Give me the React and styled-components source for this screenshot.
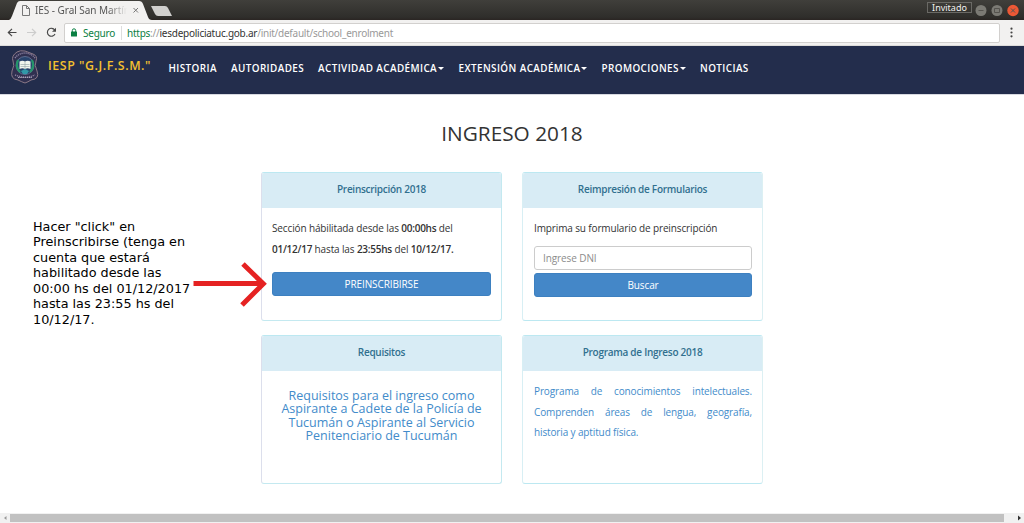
import React from "react";
import styled, { createGlobalStyle } from "styled-components";

const GlobalStyle = createGlobalStyle`
  *, *::before, *::after { box-sizing: border-box; }
  html, body { margin: 0; padding: 0; overflow: hidden; background: #fff; }
  h1, h2, p { margin: 0; font-weight: 400; }
  button, input { font: inherit; margin: 0; }
`;

const Window = styled.div`
  display: flex;
  flex-direction: column;
  width: 1024px;
  height: 523px;
  overflow: hidden;
  background: #fff;
  color: #333;
  font-family: "Open Sans", sans-serif;
`;

const TitleBar = styled.header`
  display: flex;
  justify-content: space-between;
  height: 20px;
  background: linear-gradient(#403f3b, #2f2e2b 85%, #2a2523);
`;

const TabStrip = styled.div`
  position: relative;
  width: 180px;
  height: 20px;
`;

const TabShapes = styled.svg`
  position: absolute;
  left: 0;
  top: 0;
`;

const TabLabel = styled.div`
  position: absolute;
  left: 35px;
  top: 3px;
  width: 93px;
  overflow: hidden;
  white-space: nowrap;
  font: 10px/15px "Noto Sans", sans-serif;
  letter-spacing: -0.05px;
  color: #555;
  mask-image: linear-gradient(90deg, #000 78%, transparent 99%);
`;

const WindowControls = styled.div`
  display: flex;
  align-items: flex-start;
  padding-right: 3px;
`;

const Guest = styled.div`
  width: 45px;
  height: 11px;
  margin: 2px 3px 0 0;
  border: 1px solid #6a6965;
  color: #f2f2f0;
  font: 9px/9.5px "Noto Sans", sans-serif;
  text-align: center;
`;

const Toolbar = styled.div`
  display: flex;
  align-items: center;
  height: 26px;
  background: #f2f1f0;
  border-bottom: 1px solid #dedcda;
`;

const AddressBar = styled.div`
  display: flex;
  align-items: center;
  width: 936px;
  height: 20px;
  padding-left: 6px;
  border: 1px solid #d2d0ce;
  border-radius: 2px;
  background: #fff;
  color: #999;
  font: 10px/18px "Noto Sans", sans-serif;
  letter-spacing: -0.25px;
  white-space: pre;
`;

const Secure = styled.span`
  width: 38px;
  margin-left: 6px;
  color: #0b8043;
`;

const Url = styled.span`
  margin-left: 5px;
`;

const Scheme = styled.span`
  color: #0b8043;
`;

const Host = styled.span`
  color: #333;
`;

const UrlDivider = styled.span`
  width: 1px;
  height: 14px;
  background: #ddd;
`;

const NavBar = styled.nav`
  display: flex;
  height: 49px;
  background: #232d4c;
  border-bottom: 1px solid #d7d9e0;
  color: #fff;
`;

const Brand = styled.span`
  width: 128.5px;
  padding-left: 8px;
  color: #f3c02f;
  font-size: 12.4px;
  font-weight: 600;
  line-height: 40px;
  letter-spacing: 0.55px;
  white-space: nowrap;
`;

const NavItem = styled.a`
  display: flex;
  align-items: center;
  width: ${(p) => p.$w}px;
  height: 44px;
  font-size: 9.9px;
  font-weight: 600;
  letter-spacing: 0.42px;
  white-space: nowrap;
`;

const Caret = styled.span`
  margin-left: 1px;
  margin-top: 1px;
  border: 3px solid transparent;
  border-top-color: #fff;
  border-bottom: 0;
`;

const Page = styled.main`
  position: relative;
  flex: 1;
`;

const PageTitle = styled.h1`
  padding-top: 24px;
  height: 77px;
  font-size: 20.8px;
  line-height: 28px;
  text-align: center;
`;

const Cards = styled.section`
  display: grid;
  grid-template-columns: 241px 241px;
  grid-template-rows: 149px 149px;
  column-gap: 20px;
  row-gap: 14px;
  margin-left: 261px;
`;

const Card = styled.article`
  border: 1px solid;
  border-color: ${(p) => (p.$rose ? "#bce8f1 #c4e9f0 #c4e9f0 #dcdfec" : "#bce8f1 #dcf0f3 #bce8f1 #d8eff4")};
  border-radius: 3px;
  overflow: hidden;
`;

const CardHeader = styled.h2`
  height: 35px;
  background: #d8ecf5;
  color: #31708f;
  font-size: 10px;
  font-weight: 600;
  letter-spacing: -0.27px;
  line-height: 33px;
  text-align: center;
`;

const CardBody = styled.div`
  padding: 10px ${(p) => p.$right || 10}px 10px ${(p) => p.$left || 11}px;
`;

const Text = styled.p`
  font-size: 10px;
  letter-spacing: -0.13px;
  line-height: 20.7px;
  white-space: nowrap;
  b { font-weight: 600; letter-spacing: -0.25px; }
`;

const LinkText = styled.p`
  font-size: 10px;
  letter-spacing: -0.13px;
  line-height: 20.7px;
  color: #428bca;
  text-align: justify;
`;

const RequirementsLink = styled.p`
  padding-top: 8px;
  font-size: 12.5px;
  line-height: 13.4px;
  color: #428bca;
  text-align: center;
  white-space: nowrap;
`;

const Input = styled.input`
  display: block;
  width: 100%;
  height: 24px;
  margin-top: 7px;
  padding: 0 8px;
  border: 1px solid #ccc;
  border-radius: 3px;
  font-size: 10px;
  letter-spacing: -0.1px;
  &::placeholder { color: #8c8c8c; opacity: 1; }
`;

const Button = styled.button`
  display: block;
  width: 100%;
  height: 24px;
  margin-top: ${(p) => p.$top}px;
  padding: 0;
  border: 1px solid #3d80c0;
  border-radius: 3px;
  background: #4487c8;
  color: #fff;
  font-size: 10px;
  letter-spacing: -0.1px;
  line-height: 22px;
`;

const Note = styled.p`
  position: absolute;
  left: 33px;
  top: 124px;
  color: #000;
  font: 12.8px/15.45px "DejaVu Sans", sans-serif;
  white-space: nowrap;
`;

const Arrow = styled.svg`
  position: absolute;
  left: 190px;
  top: 162px;
`;

const ScrollBar = styled.footer`
  display: flex;
  align-items: center;
  height: 10px;
  background: #f1f1f1;
`;

const Thumb = styled.div`
  width: 994px;
  height: 8px;
  background: #c1c1c1;
`;

const NAV = [
  ["HISTORIA", 62.5],
  ["AUTORIDADES", 87],
  ["ACTIVIDAD ACADÉMICA", 140.5, true],
  ["EXTENSIÓN ACADÉMICA", 143, true],
  ["PROMOCIONES", 98.5, true],
  ["NOTICIAS", 60],
];

function Crest() {
  return (
    <svg width="40" height="48" viewBox="0 0 40 48">
      <path d="M17 6Q20 4 25 5L33 8Q38 10 36 15Q34 19 37 25Q40 33 31 34Q28 36 25 37Q22 36 18 34Q10 33 12 25Q15 19 13 15Q11 10 17 6Z" fill="#303050" stroke="#8b7886" strokeWidth="1" />
      <path d="M15 12Q19 7 25 7Q31 7 35 12M15 29Q25 33 35 29" fill="none" stroke="#8b80a0" strokeWidth="1.4" strokeDasharray="1.2 .8" />
      <circle cx="25" cy="19.5" r="9" fill="#28446d" stroke="#7283a5" strokeWidth=".7" />
      <path d="M18 14Q15 21 20 26M32 14Q35 21 30 26" fill="none" stroke="#24956a" strokeWidth="2.2" />
      <path d="M19.5 15.5Q22.5 14 25 15.5Q27.5 14 30.5 15.5V23Q27.5 21.5 25 23Q22.5 21.5 19.5 23Z" fill="#eef5ee" />
      <path d="M25 15V23M20.5 18.5H29.5M20.5 20.5H29.5" stroke="#91a3a6" strokeWidth=".6" />
      <path d="M21 25L25 23L29 25L27 28H23Z" fill="#3299a9" />
      <path d="M18 31.5H32" stroke="#aaa4ba" strokeWidth="1.2" strokeDasharray="1.5 .7" />
    </svg>
  );
}

export default function App() {
  return (
    <Window>
      <GlobalStyle />
      <TitleBar>
        <TabStrip>
          <TabShapes width="180" height="20">
            <path d="M9 20Q11 19 12 16L17 3Q18 1 20 1H139Q142 1 143 4L148 17Q149 20 152 20Z" fill="#f2f1f0" />
            <path d="M151 6H165Q167 6 168 8L172 16H158Q156 16 155 14Z" fill="#d0cfcd" />
            <path d="M22.5 5.5H26.5L29.5 8.5V15.5H22.5ZM26.5 5.5V8.5H29.5" fill="none" stroke="#777" />
            <path d="M133.5 8L138 12.5M138 8L133.5 12.5" stroke="#777" strokeWidth="1" />
          </TabShapes>
          <TabLabel>IES - Gral San Martín</TabLabel>
        </TabStrip>
        <WindowControls>
          <Guest>Invitado</Guest>
          <svg width="46" height="20" viewBox="975 0 46 20">
            <circle cx="981" cy="10.5" r="5.5" fill="#7b7a74" />
            <circle cx="997" cy="10.5" r="5.5" fill="#7b7a74" />
            <circle cx="1013" cy="10.5" r="5.7" fill="#ed5835" />
            <path d="M978.5 10.5H983.5M994.5 8.5H999.5V12.5H994.5ZM1011 8.5L1015 12.5M1015 8.5L1011 12.5" fill="none" stroke="#55534e" />
          </svg>
        </WindowControls>
      </TitleBar>
      <Toolbar>
        <svg width="64" height="25" viewBox="0 0 64 25">
          <path d="M16.5 12.5H8.5M12 8.8L8.3 12.5L12 16.2" fill="none" stroke="#484848" strokeWidth="1.2" />
          <path d="M27 12.5H35.5M32 8.8L35.7 12.5L32 16.2" fill="none" stroke="#ccc" strokeWidth="1.2" />
          <path d="M54.7 10A4 4 0 1 0 55 14" fill="none" stroke="#484848" strokeWidth="1.2" />
          <path d="M56 7.7V11.7H52Z" fill="#484848" />
        </svg>
        <AddressBar>
          <svg width="6" height="9" viewBox="0 0 6 9">
            <path d="M1.3 4V2.5Q1.3 .8 3 .8Q4.7 .8 4.7 2.5V4" fill="none" stroke="#0b8043" />
            <rect y="3.5" width="6" height="5" rx=".5" fill="#0b8043" />
          </svg>
          <Secure>Seguro</Secure>
          <UrlDivider />
          <Url><Scheme>https</Scheme>://<Host>iesdepoliciatuc.gob.ar</Host>/init/default/school_enrolment</Url>
        </AddressBar>
        <svg width="24" height="25" viewBox="0 0 24 25">
          <g fill="#444"><circle cx="11.5" cy="8.7" r="1.1" /><circle cx="11.5" cy="12.5" r="1.1" /><circle cx="11.5" cy="16.3" r="1.1" /></g>
        </svg>
      </Toolbar>
      <NavBar>
        <Crest />
        <Brand>IESP "G.J.F.S.M."</Brand>
        {NAV.map(([label, w, menu]) => (
          <NavItem key={label} $w={w}>{label}{menu && <Caret />}</NavItem>
        ))}
      </NavBar>
      <Page>
        <PageTitle>INGRESO 2018</PageTitle>
        <Cards>
          <Card $rose>
            <CardHeader>Preinscripción 2018</CardHeader>
            <CardBody $left={10} $right={10}>
              <Text>Sección hábilitada desde las <b>00:00hs</b> del<br /><b>01/12/17</b> hasta las <b>23:55hs</b> del <b>10/12/17.</b></Text>
              <Button $top={12.5}>PREINSCRIBIRSE</Button>
            </CardBody>
          </Card>
          <Card>
            <CardHeader>Reimpresión de Formularios</CardHeader>
            <CardBody>
              <Text>Imprima su formulario de preinscripción</Text>
              <Input placeholder="Ingrese DNI" />
              <Button $top={3}>Buscar</Button>
            </CardBody>
          </Card>
          <Card $rose>
            <CardHeader>Requisitos</CardHeader>
            <CardBody $left={10} $right={10}>
              <RequirementsLink>Requisitos para el ingreso como<br />Aspirante a Cadete de la Policía de<br />Tucumán o Aspirante al Servicio<br />Penitenciario de Tucumán</RequirementsLink>
            </CardBody>
          </Card>
          <Card>
            <CardHeader>Programa de Ingreso 2018</CardHeader>
            <CardBody>
              <LinkText>Programa de conocimientos intelectuales. Comprenden áreas de lengua, geografía, historia y aptitud física.</LinkText>
            </CardBody>
          </Card>
        </Cards>
        <Note>Hacer "click" en<br />Preinscribirse (tenga en<br />cuenta que estará<br />habilitado desde las<br />00:00 hs del 01/12/2017<br />hasta las 23:55 hs del<br />10/12/17.</Note>
        <Arrow width="80" height="54" viewBox="190 257 80 54">
          <path d="M193.5 283.5H263M243 264L263.3 283.7L242 305" fill="none" stroke="#e52222" strokeWidth="5" />
        </Arrow>
      </Page>
      <ScrollBar>
        <svg width="10" height="10"><path d="M6.5 3V7L4 5Z" fill="#999" /></svg>
        <Thumb />
        <svg width="20" height="10"><path d="M14 2.5V7.5L17 5Z" fill="#333" /></svg>
      </ScrollBar>
    </Window>
  );
}
